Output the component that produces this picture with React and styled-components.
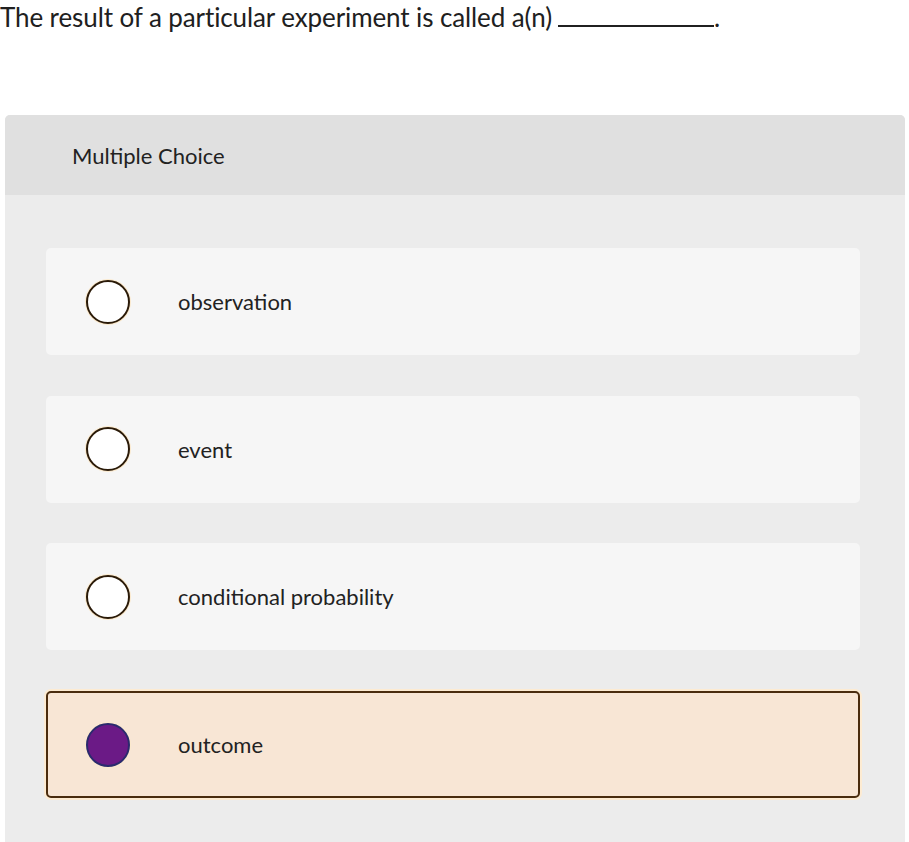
import React from "react";
import styled, { createGlobalStyle } from "styled-components";

const Global = createGlobalStyle`
  html, body { margin: 0; padding: 0; background: #ffffff; }
  body { font-family: Lato, "Open Sans", "Liberation Sans", sans-serif; color: #1c1c1c; }
`;

const Page = styled.div`
  width: 909px;
  display: flex;
  flex-direction: column;
`;

const Question = styled.div`
  font-size: 26px;
  line-height: 34px;
  padding-left: 0;
  height: 36px;
  color: #202020;
  letter-spacing: -0.1px;
  white-space: nowrap;
`;

const Blank = styled.span`
  display: inline-block;
  width: 156px;
  border-bottom: 2px solid #202020;
  margin-left: 6px;
  height: 22px;
  vertical-align: baseline;
`;

const Panel = styled.div`
  margin: 79px 4px 0 5px;
  border-radius: 5px 5px 0 0;
  background: #ececec;
  overflow: hidden;
`;

const Header = styled.div`
  height: 80px;
  background: #e0e0e0;
  display: flex;
  align-items: center;
  padding-left: 67px;
  font-size: 22px;
  color: #222;
`;

const Options = styled.div`
  display: flex;
  flex-direction: column;
  gap: 40.7px;
  padding: 53px 45px 48px 41px;
`;

const Option = styled.div`
  height: 107px;
  box-sizing: border-box;
  border-radius: 5px;
  display: flex;
  align-items: center;
  gap: 48px;
  padding-left: 38px;
  background: ${(p) => (p.$selected ? "#f8e6d5" : "#f6f6f6")};
  border: 2px solid ${(p) => (p.$selected ? "#4a2c0e" : "transparent")};
  box-shadow: ${(p) => (p.$selected ? "0 0 0 2px #fdebd2" : "none")};
`;

const Radio = styled.div`
  width: 44px;
  height: 44px;
  box-sizing: border-box;
  border-radius: 50%;
  border: 2px solid ${(p) => (p.$selected ? "#2b2a6e" : "#2a1a08")};
  background: ${(p) => (p.$selected ? "#6b1a86" : "#ffffff")};
  box-shadow: 0 0 0 1px #fbe9cc;
  flex: none;
`;

const Label = styled.span`
  font-size: 22px;
  color: #222;
`;

const choices = ["observation", "event", "conditional probability", "outcome"];

export default function App() {
  const selected = 3;
  return (
    <Page>
      <Global />
      <Question>
        The result of a particular experiment is called a(n)<Blank />.
      </Question>
      <Panel>
        <Header>Multiple Choice</Header>
        <Options>
          {choices.map((c, i) => (
            <Option key={c} $selected={i === selected}>
              <Radio $selected={i === selected} />
              <Label>{c}</Label>
            </Option>
          ))}
        </Options>
      </Panel>
    </Page>
  );
}
